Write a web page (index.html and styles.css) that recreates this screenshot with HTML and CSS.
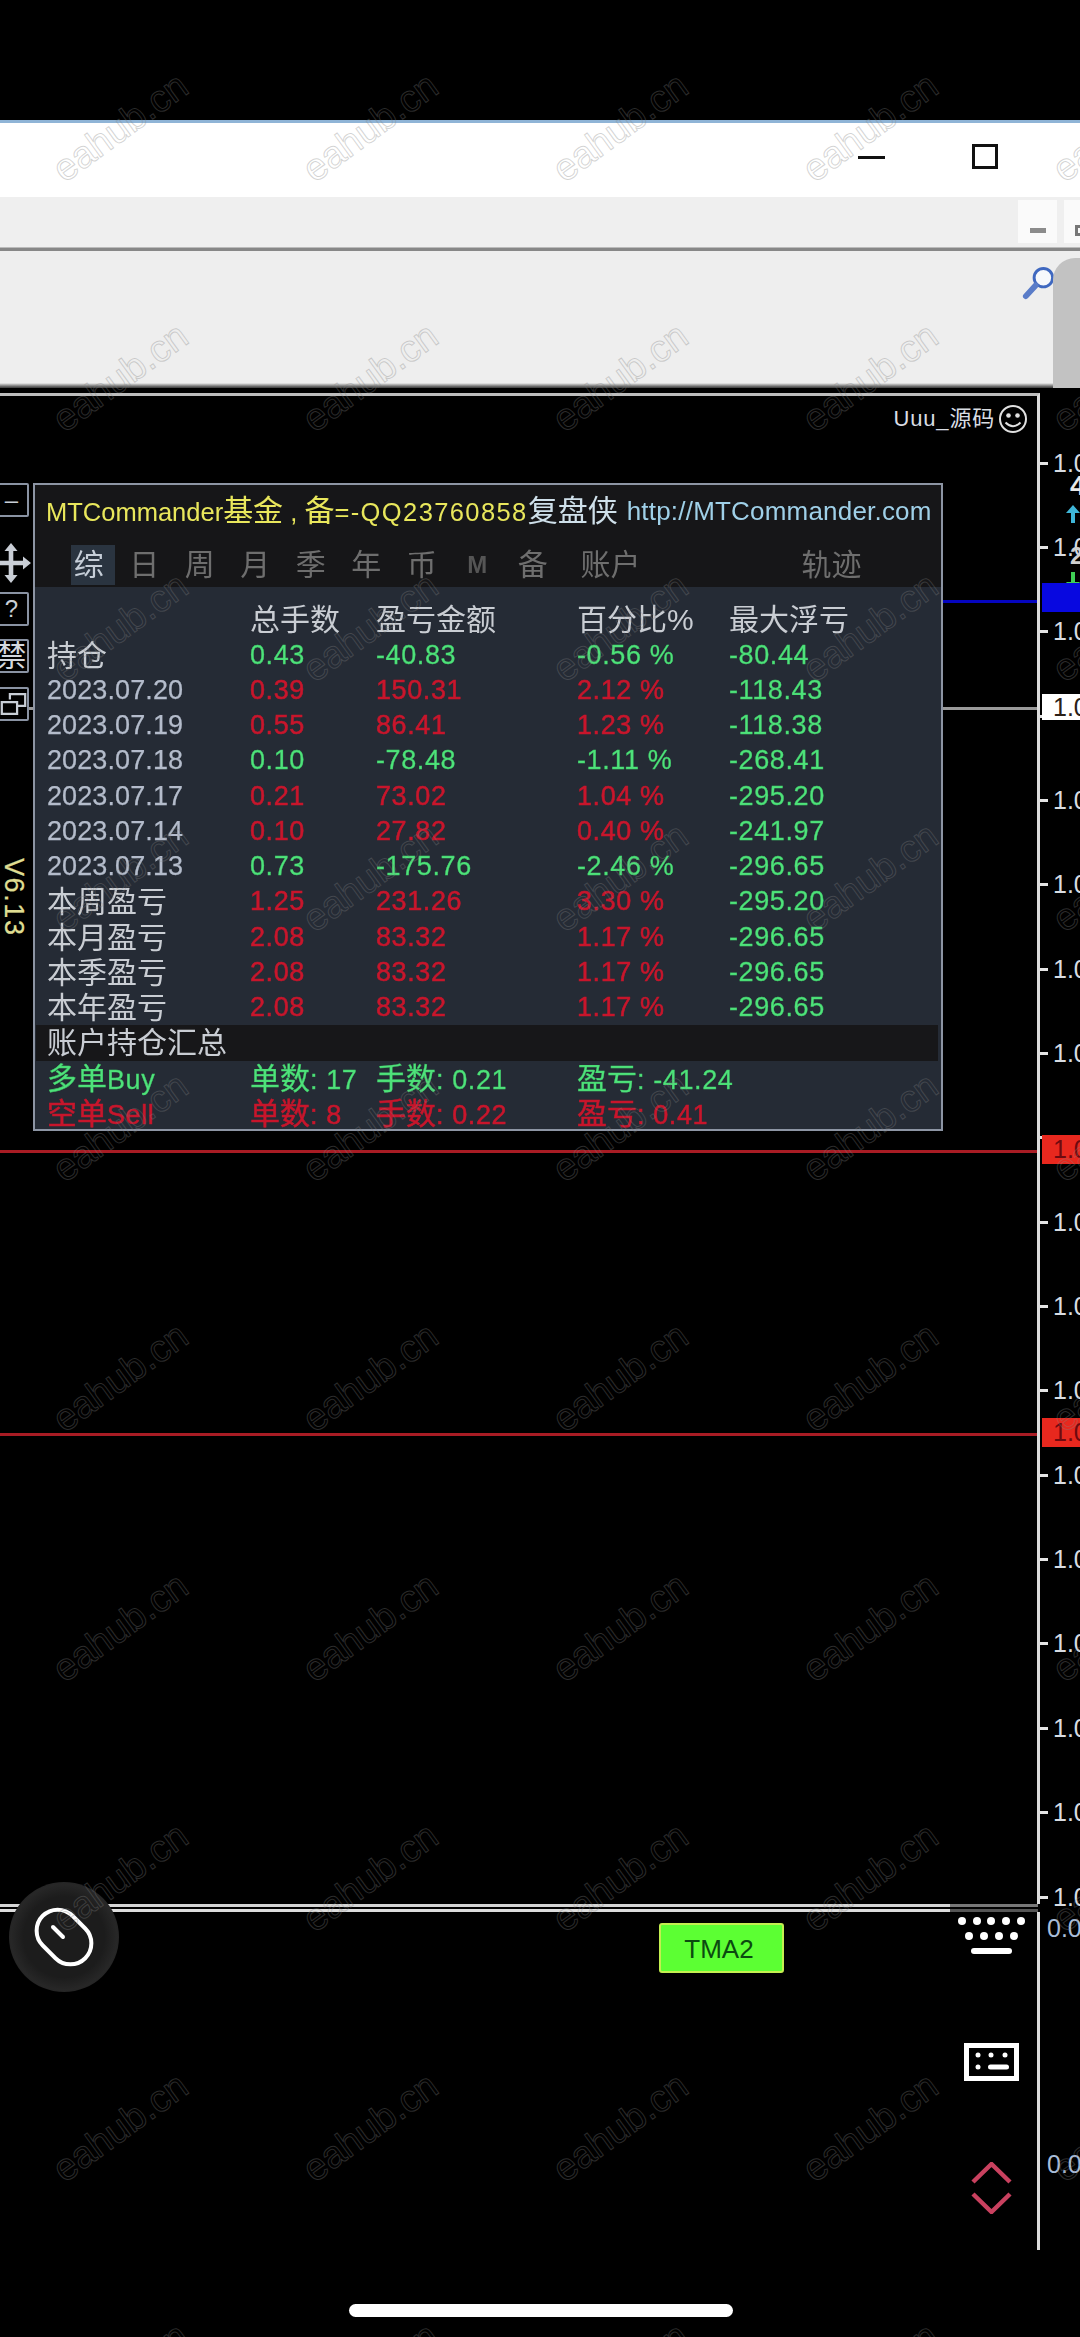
FILE: index.html
```html
<!DOCTYPE html>
<html lang="zh">
<head>
<meta charset="utf-8">
<title>MTCommander</title>
<link rel="stylesheet" href="styles.css">
</head>
<body>
<div class="page">
  <div class="top-gap"></div>
  <header class="titlebar">
    <span class="win-min"></span>
    <span class="win-max"></span>
  </header>
  <div class="toolbar">
    <span class="mini-btn"><span class="mini-dash"></span></span>
    <span class="mini-btn mini-btn-cut"><span class="mini-box"></span></span>
  </div>
  <div class="searchbar">
    <svg class="magnifier" viewBox="0 0 36 36"><circle class="mag-ring" cx="23" cy="12" r="9.5"/><path class="mag-handle" d="M15 20L5 31"/></svg>
    <div class="scroll-thumb"></div>
  </div>

  <section class="chart-row">
    <div class="plot">
      <div class="line-red line-red-a"></div>
      <div class="line-red line-red-b"></div>
      <div class="line-blue"></div>
      <div class="line-gray"></div>
      <div class="broker">
        <span>Uuu_源码</span>
        <svg class="smile" viewBox="0 0 30 30"><circle class="sm-ring" cx="15" cy="15" r="13"/><circle class="sm-eye" cx="10.500" cy="11.500" r="2.300"/><circle class="sm-eye" cx="19.500" cy="11.500" r="2.300"/><path class="sm-ring" d="M7.500 18.500Q15 26 22.500 18.500"/></svg>
      </div>

      <aside class="tools">
        <div class="tool tool-first">–</div>
        <svg class="move" viewBox="0 0 40 40"><path d="M20 0l6.500 8h-4.200v9.700H32v-4.200l8 6.500-8 6.500v-4.200h-9.700V32h4.200L20 40l-6.500-8h4.200v-9.700H8v4.200L0 20l8-6.500v4.200h9.700V8h-4.200z"/></svg>
        <div class="tool">?</div>
        <div class="tool tool-cjk">禁</div>
        <div class="tool tool-icon"><svg class="restore" viewBox="0 0 30 26"><path d="M11 8V2h17v13h-8M2 11h17v13H2z"/></svg></div>
        <div class="version">V6.13</div>
      </aside>

      <div class="panel">
        <div class="panel-head">
          <div class="brand"><span class="brand-yellow">MTCommander<span class="zh">基金</span> , <span class="zh">备</span><span class="brand-qq">=-QQ23760858</span></span><span class="brand-white">复盘侠</span><span class="brand-url">http://MTCommander.com</span></div>
          <nav class="tabs">
            <span class="tab tab-on"><span class="tab-tile">综</span></span>
            <span class="tab">日</span>
            <span class="tab">周</span>
            <span class="tab">月</span>
            <span class="tab">季</span>
            <span class="tab">年</span>
            <span class="tab">币</span>
            <span class="tab tab-m">M</span>
            <span class="tab">备</span>
            <span class="tab tab-wide tab-account">账户</span>
            <span class="tab tab-wide tab-track">轨迹</span>
          </nav>
        </div>
        <div class="panel-body">
          <div class="row row-head"><span></span><span>总手数</span><span>盈亏金额</span><span>百分比%</span><span>最大浮亏</span></div>
          <div class="row"><span class="cjk">持仓</span><span class="g">0.43</span><span class="g">-40.83</span><span class="g">-0.56 %</span><span class="g">-80.44</span></div>
          <div class="row"><span class="date">2023.07.20</span><span class="r">0.39</span><span class="r">150.31</span><span class="r">2.12 %</span><span class="g">-118.43</span></div>
          <div class="row"><span class="date">2023.07.19</span><span class="r">0.55</span><span class="r">86.41</span><span class="r">1.23 %</span><span class="g">-118.38</span></div>
          <div class="row"><span class="date">2023.07.18</span><span class="g">0.10</span><span class="g">-78.48</span><span class="g">-1.11 %</span><span class="g">-268.41</span></div>
          <div class="row"><span class="date">2023.07.17</span><span class="r">0.21</span><span class="r">73.02</span><span class="r">1.04 %</span><span class="g">-295.20</span></div>
          <div class="row"><span class="date">2023.07.14</span><span class="r">0.10</span><span class="r">27.82</span><span class="r">0.40 %</span><span class="g">-241.97</span></div>
          <div class="row"><span class="date">2023.07.13</span><span class="g">0.73</span><span class="g">-175.76</span><span class="g">-2.46 %</span><span class="g">-296.65</span></div>
          <div class="row"><span class="cjk">本周盈亏</span><span class="r">1.25</span><span class="r">231.26</span><span class="r">3.30 %</span><span class="g">-295.20</span></div>
          <div class="row"><span class="cjk">本月盈亏</span><span class="r">2.08</span><span class="r">83.32</span><span class="r">1.17 %</span><span class="g">-296.65</span></div>
          <div class="row"><span class="cjk">本季盈亏</span><span class="r">2.08</span><span class="r">83.32</span><span class="r">1.17 %</span><span class="g">-296.65</span></div>
          <div class="row"><span class="cjk">本年盈亏</span><span class="r">2.08</span><span class="r">83.32</span><span class="r">1.17 %</span><span class="g">-296.65</span></div>
          <div class="row row-section"><span class="cjk">账户持仓汇总</span></div>
          <div class="row"><span class="g"><span class="zh">多单</span>Buy</span><span class="g"><span class="zh">单数</span>: 17</span><span class="g"><span class="zh">手数</span>: 0.21</span><span class="g"><span class="zh">盈亏</span>: -41.24</span></div>
          <div class="row"><span class="r"><span class="zh">空单</span>Sell</span><span class="r"><span class="zh">单数</span>: 8</span><span class="r"><span class="zh">手数</span>: 0.22</span><span class="r"><span class="zh">盈亏</span>: 0.41</span></div>
        </div>
      </div>
    </div>

    <div class="axis">
      <div class="tick-row"><i></i><span>1.0</span></div>
      <div class="tick-row"><i></i><span>1.0</span></div>
      <div class="tick-row"><i></i><span>1.0</span></div>
      <div class="tick-row"><i></i></div>
      <div class="tick-row"><i></i><span>1.0</span></div>
      <div class="tick-row"><i></i><span>1.0</span></div>
      <div class="tick-row"><i></i><span>1.0</span></div>
      <div class="tick-row"><i></i><span>1.0</span></div>
      <div class="tick-row"><i></i></div>
      <div class="tick-row"><i></i><span>1.0</span></div>
      <div class="tick-row"><i></i><span>1.0</span></div>
      <div class="tick-row"><i></i><span>1.0</span></div>
      <div class="tick-row"><i></i><span>1.0</span></div>
      <div class="tick-row"><i></i><span>1.0</span></div>
      <div class="tick-row"><i></i><span>1.0</span></div>
      <div class="tick-row"><i></i><span>1.0</span></div>
      <div class="tick-row"><i></i><span>1.0</span></div>
      <div class="tick-row"><i></i><span>1.0</span></div>
    </div>

    <div class="flag flag-four">4</div>
    <div class="flag flag-two">2</div>
    <svg class="arrow arrow-up" viewBox="0 0 14 18"><path d="M7 0l7 8H9v10H5V8H0z"/></svg>
    <svg class="arrow arrow-down" viewBox="0 0 14 18"><path d="M5 0h4v10h5l-7 8-7-8h5z"/></svg>
    <div class="price price-blue"></div>
    <div class="price price-white">1.0</div>
    <div class="price price-red price-red-a">1.0</div>
    <div class="price price-red price-red-b">1.0</div>
  </section>

  <div class="split"></div>

  <section class="sub-row">
    <div class="sub-plot">
      <button class="tma">TMA2</button>
      <svg class="float-icon kb-dots" viewBox="0 0 72 42"><circle cx="4" cy="5" r="4"/><circle cx="19" cy="5" r="4"/><circle cx="33" cy="5" r="4"/><circle cx="48" cy="5" r="4"/><circle cx="63" cy="5" r="4"/><circle cx="11" cy="20" r="4"/><circle cx="26" cy="20" r="4"/><circle cx="41" cy="20" r="4"/><circle cx="56" cy="20" r="4"/><rect x="13" y="32" width="41" height="6" rx="3"/></svg>
      <svg class="float-icon kb-box" viewBox="0 0 55 38"><rect class="kb-frame" x="2.500" y="2.500" width="50" height="33"/><circle cx="14" cy="12" r="2.500"/><circle cx="27" cy="12" r="2.500"/><circle cx="41" cy="12" r="2.500"/><circle cx="14" cy="24" r="2.500"/><rect x="24" y="21.500" width="21" height="5" rx="2.500"/></svg>
      <svg class="float-icon chevrons" viewBox="0 0 41 52"><path d="M2 20L20.500 2L39 20M2 32L20.500 50L39 32"/></svg>
    </div>
    <div class="sub-axis">
      <span class="sub-zero sub-zero-a">0.0</span>
      <span class="sub-zero sub-zero-b">0.0</span>
    </div>
  </section>

  <div class="home-bar"></div>

  <div class="mouse-btn">
    <svg class="mouse-icon" viewBox="0 0 60 60"><rect class="mouse-body" x="9" y="0" width="42" height="60" rx="21" transform="rotate(-45 30 30)"/><path class="mouse-wheel" d="M19 20L29 30"/></svg>
  </div>

  <div class="watermarks">
    <span>eahub.cn</span><span>eahub.cn</span><span>eahub.cn</span><span>eahub.cn</span><span>eahub.cn</span>
    <span>eahub.cn</span><span>eahub.cn</span><span>eahub.cn</span><span>eahub.cn</span><span>eahub.cn</span>
    <span>eahub.cn</span><span>eahub.cn</span><span>eahub.cn</span><span>eahub.cn</span><span>eahub.cn</span>
    <span>eahub.cn</span><span>eahub.cn</span><span>eahub.cn</span><span>eahub.cn</span><span>eahub.cn</span>
    <span>eahub.cn</span><span>eahub.cn</span><span>eahub.cn</span><span>eahub.cn</span><span>eahub.cn</span>
    <span>eahub.cn</span><span>eahub.cn</span><span>eahub.cn</span><span>eahub.cn</span><span>eahub.cn</span>
    <span>eahub.cn</span><span>eahub.cn</span><span>eahub.cn</span><span>eahub.cn</span><span>eahub.cn</span>
    <span>eahub.cn</span><span>eahub.cn</span><span>eahub.cn</span><span>eahub.cn</span><span>eahub.cn</span>
    <span>eahub.cn</span><span>eahub.cn</span><span>eahub.cn</span><span>eahub.cn</span><span>eahub.cn</span>
    <span>eahub.cn</span><span>eahub.cn</span><span>eahub.cn</span><span>eahub.cn</span><span>eahub.cn</span>
  </div>
</div>
</body>
</html>
```

FILE: styles.css
```css
* { box-sizing: border-box; }

html, body {
  margin: 0;
  padding: 0;
  background: #000;
}

body {
  font-family: "Liberation Sans", "Noto Sans CJK SC", sans-serif;
}

.page {
  position: relative;
  width: 1080px;
  height: 2337px;
  overflow: hidden;
  background: #000;
}

.top-gap { height: 120px; }

/* window chrome */
.titlebar {
  height: 77px;
  background: #fff;
  border-top: 3px solid #8fb4d6;
  display: flex;
  align-items: flex-start;
  padding: 21px 0 0 858px;
}

.win-min {
  width: 27px;
  height: 3px;
  margin-top: 12px;
  background: #111;
}

.win-max {
  width: 26px;
  height: 25px;
  margin-left: 87px;
  border: 3px solid #111;
}

.toolbar {
  height: 51px;
  background: #efefef;
  border-bottom: 1px solid #bbb;
  display: flex;
  gap: 7px;
  padding: 3px 0 0 1018px;
}

.mini-btn {
  flex: none;
  width: 39px;
  height: 43px;
  background: #fafafa;
  display: flex;
  justify-content: center;
  padding-top: 28px;
}

.mini-btn-cut {
  justify-content: flex-start;
  padding: 25px 0 0 11px;
}

.mini-dash {
  width: 16px;
  height: 5px;
  background: #8b8b8b;
}

.mini-box {
  flex: none;
  width: 12px;
  height: 11px;
  border: 3px solid #777;
}

.searchbar {
  height: 140px;
  background: linear-gradient(#eee 0, #eee 132px, #555 136px, #000 140px);
  border-top: 3px solid #878787;
  display: flex;
  padding: 7px 0 0 1021px;
}

.magnifier {
  flex: none;
  width: 35px;
  height: 35px;
  margin-top: 8px;
  fill: none;
}

.mag-ring { stroke: #3f68c0; stroke-width: 3; fill: #f6f8fc; }
.mag-handle { stroke: #5a7cc8; stroke-width: 6; stroke-linecap: round; }

.scroll-thumb {
  flex: none;
  width: 40px;
  height: 130px;
  margin-left: -3px;
  background: #c2c2c2;
  border-radius: 22px 0 0 0;
}

/* chart */
.chart-row {
  position: relative;
  display: flex;
  height: 1516px;
}

.plot {
  position: relative;
  flex: none;
  width: 1040px;
  margin-top: 5px;
  border-top: 3px solid #bdbdbd;
  border-right: 3px solid #dcdcdc;
}

.line-red,
.line-blue,
.line-gray {
  position: absolute;
  right: 0;
}

.line-red {
  left: 0;
  height: 3px;
  background: #a81c24;
}

.line-red-a { top: 754px; }
.line-red-b { top: 1037px; }

.line-blue {
  left: 900px;
  top: 204px;
  height: 3px;
  background: #0505c0;
}

.line-gray {
  left: 20px;
  top: 311px;
  height: 3px;
  background: #9a9a9a;
}

.broker {
  position: absolute;
  right: 9px;
  top: 8px;
  display: flex;
  align-items: center;
  gap: 3px;
  color: #d9dde3;
  font-size: 22px;
  line-height: 28px;
  letter-spacing: 0.8px;
}

.smile {
  width: 30px;
  height: 30px;
  fill: none;
}

.sm-ring { stroke: #e0e0e0; stroke-width: 2; }
.sm-eye { fill: #e0e0e0; }

/* left tools */
.tools {
  position: absolute;
  left: -6px;
  top: 87px;
  width: 35px;
  display: flex;
  flex-direction: column;
  gap: 9px;
}

.tool {
  width: 35px;
  height: 34px;
  background: #000;
  border: 2px solid #8a93a3;
  border-radius: 2px;
  color: #c8ced6;
  font-size: 24px;
  line-height: 30px;
  text-align: center;
}

.tool-first { margin-bottom: 17px; }

.tool-cjk {
  font-size: 30px;
  margin: 4px 0 5px;
  overflow: hidden;
  line-height: 30px;
  color: #d4d8de;
}

.tool-icon {
  display: flex;
  align-items: center;
  justify-content: center;
  padding-left: 4px;
}

.restore {
  width: 28px;
  height: 26px;
  fill: none;
  stroke: #c8ced6;
  stroke-width: 2.5;
}

.move {
  width: 40px;
  height: 40px;
  margin-left: -3px;
  fill: #c9ced6;
}

.version {
  margin: 128px 0 0 7px;
  writing-mode: vertical-rl;
  color: #dfdd92;
  font-size: 27px;
  line-height: 30px;
  letter-spacing: 1.6px;
  -webkit-text-stroke: 0.3px #dfdd92;
}

/* MTCommander panel */
.panel {
  position: absolute;
  left: 33px;
  top: 87px;
  width: 910px;
  height: 648px;
  border: 2px solid #8d95a4;
  background: #252b35;
  z-index: 2;
  filter: blur(0.45px);
}

.panel-head {
  height: 102px;
  background: #161618;
}

.brand {
  height: 52px;
  display: flex;
  align-items: center;
  padding-left: 11px;
  white-space: nowrap;
  font-size: 25.500px;
  line-height: 52px;
}

.brand-yellow { color: #e9e75c; }
.brand-qq { letter-spacing: 1.4px; }
.brand-white { color: #cfe0ea; font-size: 30px; }
.brand-url { color: #9fd0e8; margin-left: 9px; font-size: 26px; letter-spacing: 0.2px; }

.zh { font-size: 30px; letter-spacing: 0; }

.tabs {
  height: 50px;
  display: flex;
  align-items: center;
  padding: 6px 0 0 26px;
  color: #6e6e6e;
  font-size: 30px;
  line-height: 40px;
}

.tab {
  flex: none;
  width: 55.5px;
  text-align: center;
}

.tab-tile {
  display: inline-block;
  width: 44px;
  margin-left: 8px;
  padding-left: 3px;
  text-align: left;
  background: #2a3440;
  color: #c6ced8;
}

.tab-m { font-size: 24px; font-weight: bold; color: #555; }
.tab-wide { width: 60px; }
.tab-account { margin-left: 20px; }
.tab-track { margin-left: 161px; }

.panel-body { padding-top: 15.4px; }

.row {
  display: grid;
  grid-template-columns: 203px 126px 201px 152px 1fr;
  height: 35.25px;
  padding-left: 12px;
  font-size: 27px;
  line-height: 35.25px;
  letter-spacing: 0.6px;
  white-space: nowrap;
}

.row-head,
.cjk {
  color: #c9cdd3;
  font-size: 30px;
  letter-spacing: 0;
}

.row-section {
  background: #171719;
  margin-right: 3px;
  padding-left: 11px;
  margin-left: 1px;
}

.date { color: #b4bccb; letter-spacing: 0.1px; -webkit-text-stroke: 0.25px #b4bccb; }
.g { color: #4fe27b; -webkit-text-stroke: 0.35px #3fcf68; }
.r { color: #c8162c; -webkit-text-stroke: 0.5px #c8162c; }

/* price axis */
.axis {
  flex: none;
  width: 40px;
  padding-top: 33px;
}

.tick-row {
  height: 84.35px;
  display: flex;
  align-items: center;
  gap: 5px;
  color: #d8dce2;
  font-size: 25px;
  white-space: nowrap;
}

.tick-row i {
  flex: none;
  width: 8px;
  height: 3px;
  background: #e4e4e4;
}

.flag,
.arrow,
.price {
  position: absolute;
}

.flag {
  left: 1070px;
  color: #e8e8e8;
  font-size: 28px;
  font-weight: bold;
  line-height: 28px;
}

.flag-four { top: 84px; }
.flag-two { top: 154px; font-size: 24px; color: #cfcfcf; }

.arrow {
  left: 1066px;
  width: 14px;
  height: 18px;
}

.arrow-up { top: 117px; fill: #3fb6d8; }
.arrow-down { top: 184px; fill: #3fcf55; }

.price {
  left: 1042px;
  width: 38px;
  padding-left: 11px;
  font-size: 25px;
  white-space: nowrap;
  overflow: hidden;
}

.price-blue { top: 195px; height: 29px; background: #0808e0; }
.price-white { top: 306px; height: 26px; line-height: 26px; background: #fff; color: #2a2018; }
.price-red { height: 29px; line-height: 29px; background: #e8281e; color: #6e0a10; }
.price-red-a { top: 747px; }
.price-red-b { top: 1030px; }

/* separator between chart and sub-window */
.split {
  height: 8px;
  width: 1038px;
  background:
    linear-gradient(to right, #d4d4d4 950px, #777 950px) top / 100% 3px no-repeat,
    linear-gradient(to right, #dcdcdc 950px, #555 950px) bottom / 100% 3px no-repeat;
}

/* sub window */
.sub-row {
  display: flex;
  height: 338px;
}

.sub-plot {
  position: relative;
  flex: none;
  width: 1040px;
  border-right: 3px solid #dcdcdc;
  padding: 11px 0 0 659px;
}

.tma {
  display: block;
  width: 125px;
  height: 50px;
  padding: 3px 5px 0 0;
  background: #5cff33;
  border: 2px solid #c4ee50;
  border-radius: 3px;
  color: #0b4a10;
  font: 26px "Liberation Sans", sans-serif;
}

.float-icon {
  position: absolute;
  fill: #fff;
}

.kb-dots { left: 958px; top: 4px; width: 72px; height: 42px; }
.kb-box { left: 964px; top: 131px; width: 55px; height: 38px; }
.kb-frame { fill: none; stroke: #fff; stroke-width: 5; }

.chevrons {
  left: 971px;
  top: 250px;
  width: 41px;
  height: 52px;
  fill: none;
  stroke: #c9415f;
  stroke-width: 4.500;
  stroke-linejoin: round;
}

.sub-axis {
  flex: none;
  width: 40px;
  position: relative;
}

.sub-zero {
  position: absolute;
  left: 7px;
  color: #a9bcd8;
  font-size: 25px;
  line-height: 28px;
}

.sub-zero-a { top: 2px; }
.sub-zero-b { top: 238px; }

.home-bar {
  width: 384px;
  height: 13px;
  margin: 54px 0 0 349px;
  background: #fff;
  border-radius: 7px;
}

/* floating assistive button */
.mouse-btn {
  position: absolute;
  left: 9px;
  top: 1882px;
  width: 110px;
  height: 110px;
  border-radius: 50%;
  background: radial-gradient(circle, #1c1c1c 0, #1c1c1c 52%, #272727 68%, #1d1d1d 82%, #0a0a0a 94%, rgba(0, 0, 0, 0) 100%);
  display: flex;
  align-items: center;
  justify-content: center;
  z-index: 3;
}

.mouse-icon {
  width: 60px;
  height: 60px;
  overflow: visible;
}

.mouse-body { fill: none; stroke: #fff; stroke-width: 4; }
.mouse-wheel { fill: none; stroke: #fff; stroke-width: 4; stroke-linecap: round; }

/* watermark layer */
.watermarks {
  position: absolute;
  left: -5px;
  top: 2px;
  display: grid;
  grid-template-columns: repeat(5, 250px);
  grid-auto-rows: 250px;
  z-index: 5;
  pointer-events: none;
}

.watermarks span {
  display: flex;
  align-items: center;
  justify-content: center;
  transform: rotate(-36deg);
  color: transparent;
  -webkit-text-stroke: 1px rgba(128, 128, 128, 0.34);
  font-size: 38px;
  white-space: nowrap;
}
```
